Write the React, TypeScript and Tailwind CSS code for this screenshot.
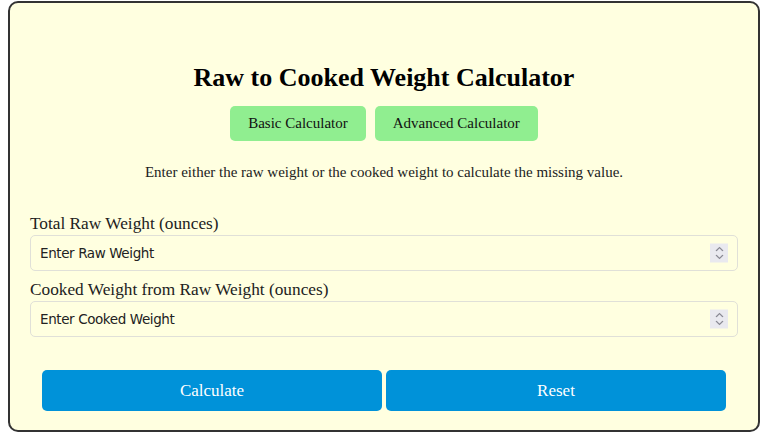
import React from 'react'

function Spinner() {
  return (
    <div className="pointer-events-none absolute right-[10px] top-1/2 flex h-[19px] w-[18px] -translate-y-1/2 flex-col items-center justify-center gap-[3px] bg-[#e9e9ef]">
      <svg width="9" height="5" viewBox="0 0 9 5" fill="none">
        <path d="M1 4.5L4.5 1L8 4.5" stroke="#8a8a94" strokeWidth="1.2" />
      </svg>
      <svg width="9" height="5" viewBox="0 0 9 5" fill="none">
        <path d="M1 0.5L4.5 4L8 0.5" stroke="#8a8a94" strokeWidth="1.2" />
      </svg>
    </div>
  )
}

function Field({ label, placeholder }: { label: string; placeholder: string }) {
  return (
    <div className="flex flex-col">
      <label className="text-[17.3px] leading-[21px] text-[#222]">{label}</label>
      <div className="relative mt-px">
        <input
          type="text"
          placeholder={placeholder}
          className="h-[36px] w-full rounded-[5px] border border-[#e0e0d8] bg-transparent px-[9px] text-[13.5px] tracking-[-0.4px] text-[#222] outline-none placeholder:text-[#222] [font-family:'DejaVu_Sans',Verdana,sans-serif]"
        />
        <Spinner />
      </div>
    </div>
  )
}

export default function App() {
  return (
    <div className="min-h-screen bg-white pt-px">
      <div className="mx-2 h-[431px] rounded-[10px] border-2 border-[#333] bg-[#ffffe0] px-5 pt-[60px] [font-family:'Liberation_Serif','Times_New_Roman',serif]">
        <h2 className="text-center text-[26px] font-bold leading-[30px] text-black">Raw to Cooked Weight Calculator</h2>
        <div className="mt-[13px] flex justify-center gap-[9px]">
          <button className="h-[35px] rounded-[5px] bg-[#90ee90] px-[18px] text-[15px] text-[#111]">Basic Calculator</button>
          <button className="h-[35px] rounded-[5px] bg-[#90ee90] px-[18px] text-[15px] text-[#111]">Advanced Calculator</button>
        </div>
        <p className="mt-[22px] text-center text-[15px] leading-[18px] text-[#222]">
          Enter either the raw weight or the cooked weight to calculate the missing value.
        </p>
        <div className="mt-[32px] flex flex-col gap-[8px]">
          <Field label="Total Raw Weight (ounces)" placeholder="Enter Raw Weight" />
          <Field label="Cooked Weight from Raw Weight (ounces)" placeholder="Enter Cooked Weight" />
        </div>
        <div className="mt-[33px] flex justify-center gap-[4px]">
          <button className="h-[41px] w-[340px] rounded-[5px] bg-[#0092d9] text-[17px] text-white">Calculate</button>
          <button className="h-[41px] w-[340px] rounded-[5px] bg-[#0092d9] text-[17px] text-white">Reset</button>
        </div>
      </div>
    </div>
  )
}
